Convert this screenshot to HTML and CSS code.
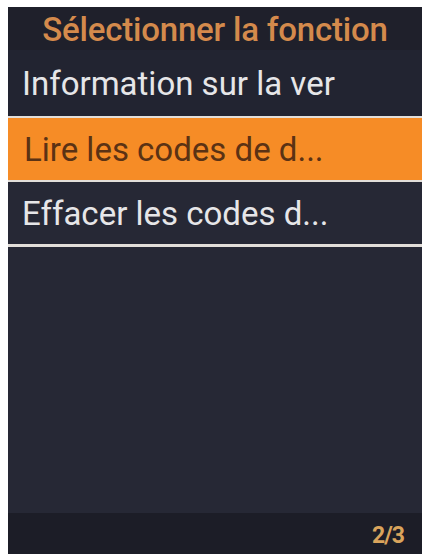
FILE: index.html
```html
<!DOCTYPE html>
<html lang="fr">
<head>
<meta charset="utf-8">
<link rel="stylesheet" href="styles.css">
</head>
<body>
<div class="screen">
  <div class="title">Sélectionner la fonction</div>
  <div class="row first">Information sur la ver</div>
  <div class="sep"></div>
  <div class="row active">Lire les codes de d...</div>
  <div class="sep"></div>
  <div class="row">Effacer les codes d...</div>
  <div class="sep thick"></div>
  <div class="empty"></div>
  <div class="footer"><span class="page">2/3</span></div>
</div>
</body>
</html>
```
FILE: styles.css
```css
html, body {
  margin: 0;
  padding: 0;
  background: #ffffff;
}
body {
  font-family: Roboto, "Liberation Sans", sans-serif;
}
.screen {
  margin: 7px 4px 0 8px;
  width: 414px;
  height: 547px;
  background: #262835;
  display: flex;
  flex-direction: column;
  overflow: hidden;
}
.title {
  height: 43px;
  flex: none;
  background: #1f202b;
  color: #d48a4c;
  font-size: 33px;
  font-weight: 500;
  letter-spacing: -0.2px;
  text-align: center;
  line-height: 46px;
  white-space: nowrap;
}
.row {
  flex: none;
  height: 62px;
  padding-left: 14px;
  display: flex;
  align-items: center;
  color: #e6e6e8;
  font-size: 33px;
  background: #262835;
  white-space: nowrap;
}
.row.first {
  height: 66px;
  background: #222431;
}
.row.active {
  background: #f68c26;
  color: #5b3214;
  padding-left: 16px;
}
.sep {
  flex: none;
  height: 2px;
  background: #e2ded9;
}
.sep.thick {
  height: 3px;
}
.empty {
  flex: 1;
  background: #262835;
}
.footer {
  flex: none;
  height: 41px;
  background: #1c1d27;
  display: flex;
  align-items: center;
  justify-content: flex-end;
  padding-right: 18px;
}
.page {
  color: #d9a45c;
  font-size: 23px;
  font-weight: 700;
  letter-spacing: -1px;
  padding-top: 4px;
}
```
